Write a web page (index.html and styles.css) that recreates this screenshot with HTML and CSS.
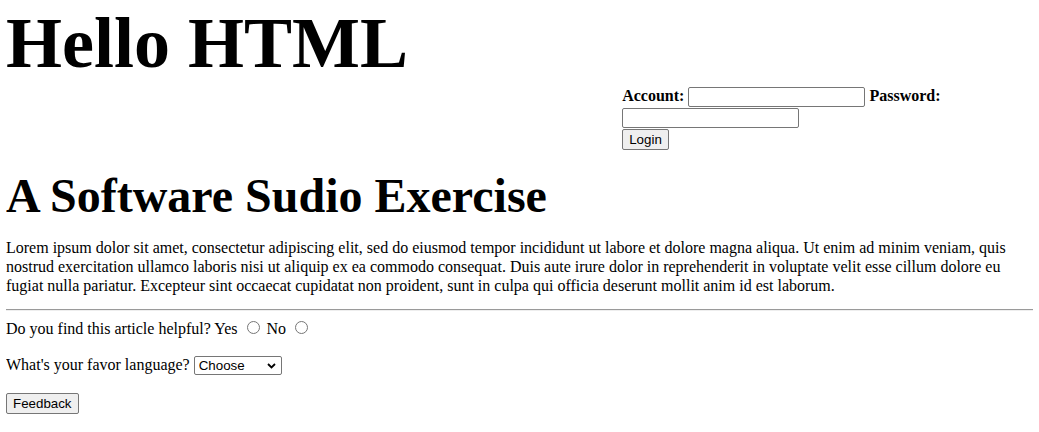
FILE: index.html
```html
<!DOCTYPE html>
<html>
<head>
<meta charset="utf-8">
<title>Hello HTML</title>
<link rel="stylesheet" href="styles.css">
</head>
<body>
<h1 class="title">Hello HTML</h1>
<form class="login">
  <label class="lbl">Account:</label> <input class="field" type="text">
  <label class="lbl">Password:</label> <input class="field" type="password">
  <br>
  <button class="btn" type="button">Login</button>
</form>
<h1 class="heading">A Software Sudio Exercise</h1>
<p class="text">Lorem ipsum dolor sit amet, consectetur adipiscing elit, sed do eiusmod tempor incididunt ut labore et dolore magna aliqua. Ut enim ad minim veniam, quis nostrud exercitation ullamco laboris nisi ut aliquip ex ea commodo consequat. Duis aute irure dolor in reprehenderit in voluptate velit esse cillum dolore eu fugiat nulla pariatur. Excepteur sint occaecat cupidatat non proident, sunt in culpa qui officia deserunt mollit anim id est laborum.</p>
<hr class="rule">
<form class="survey">
  <div class="row row-radio">Do you find this article helpful? <label>Yes <input class="radio" type="radio" name="helpful"></label> <label>No <input class="radio" type="radio" name="helpful"></label></div>
  <div class="row row-select">What's your favor language? <span class="select-wrap"><select class="select"><option>Choose</option><option>HTML</option><option>CSS</option><option>JavaScript</option></select><svg class="chevron" width="9" height="6" viewBox="0 0 9 6"><path d="M1 1 L4.5 4.5 L8 1" fill="none" stroke="#000" stroke-width="1.8"/></svg></span></div>
  <div class="row"><button class="btn" type="button">Feedback</button></div>
</form>
</body>
</html>
```
FILE: styles.css
```css
body {
  margin: 6px;
  font-family: "Liberation Serif", "Times New Roman", serif;
  font-size: 16px;
  color: #000;
  background: #fff;
}
.title {
  font-size: 72px;
  margin: -4px 0 0;
}
.login {
  float: right;
  width: 40%;
  margin: 0 0 18px;
  line-height: 21px;
}
.lbl {
  font-weight: bold;
}
.field {
  width: 177px;
  height: 20px;
  box-sizing: border-box;
  border: 1px solid #767676;
  border-radius: 2px;
  padding: 1px 2px;
  margin: 0;
  font-family: "Liberation Sans", Arial, sans-serif;
  font-size: 13.33px;
}
.btn {
  box-sizing: border-box;
  height: 21px;
  font-family: "Liberation Sans", Arial, sans-serif;
  font-size: 13.33px;
  padding: 1px 6px;
  margin: 0;
  border: 1px solid #767676;
  border-radius: 2px;
  background: #efefef;
  color: #000;
  line-height: normal;
}
.heading {
  clear: both;
  font-size: 48px;
  margin: 0 0 15px;
}
.text {
  margin: 0 0 14px;
  line-height: 19px;
}
.rule {
  margin: 8px 0 7px;
  border: 0;
  border-top: 1px solid #9a9a9a;
  border-bottom: 1px solid #eeeeee;
  height: 0;
}
.row {
  margin: 0 0 15px;
}
.row-radio {
  margin-bottom: 18px;
}
.row-select {
  margin-bottom: 18px;
}
.radio {
  width: 13px;
  height: 13px;
  margin: 3px 3px 0 5px;
}
.select-wrap {
  position: relative;
  display: inline-block;
}
.select {
  -webkit-appearance: none;
  appearance: none;
  box-sizing: border-box;
  font-family: "Liberation Sans", Arial, sans-serif;
  font-size: 13.33px;
  border: 1px solid #767676;
  border-radius: 2px;
  width: 88px;
  height: 19px;
  padding: 0 0 0 4px;
  margin: 0;
  background: #fff;
  color: #000;
}
.chevron {
  position: absolute;
  right: 6px;
  top: 7px;
  pointer-events: none;
}
```
